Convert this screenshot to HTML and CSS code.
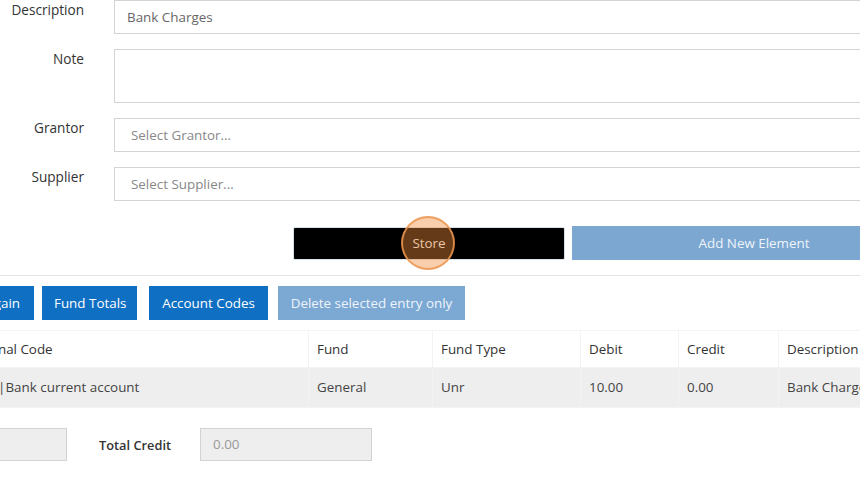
FILE: index.html
```html
<!DOCTYPE html>
<html>
<head>
	<meta charset="utf-8">
	<title>Journal Entry</title>
	<link rel="stylesheet" href="styles.css">
</head>
<body>
<main class="page">
	<div class="form-row">
		<label class="form-label">Description</label>
		<input class="form-input" type="text" value="Bank Charges">
	</div>
	<div class="form-row">
		<label class="form-label">Note</label>
		<textarea class="form-input form-note"></textarea>
	</div>
	<div class="form-row">
		<label class="form-label">Grantor</label>
		<div class="form-input form-select">Select Grantor...</div>
	</div>
	<div class="form-row">
		<label class="form-label">Supplier</label>
		<div class="form-input form-select">Select Supplier...</div>
	</div>

	<div class="actions">
		<button class="btn btn-store">Store<span class="click-mark"></span></button>
		<button class="btn btn-add">Add New Element</button>
	</div>

	<hr class="divider">

	<div class="toolbar">
		<button class="btn btn-blue btn-again">Start Again</button>
		<button class="btn btn-blue btn-totals">Fund Totals</button>
		<button class="btn btn-blue btn-codes">Account Codes</button>
		<button class="btn btn-disabled">Delete selected entry only</button>
	</div>

	<table class="entries">
		<colgroup>
			<col class="c-code">
			<col class="c-fund">
			<col class="c-type">
			<col class="c-debit">
			<col class="c-credit">
			<col class="c-desc">
		</colgroup>
		<thead>
			<tr>
				<th>Nominal Code</th>
				<th>Fund</th>
				<th>Fund Type</th>
				<th>Debit</th>
				<th>Credit</th>
				<th>Description</th>
			</tr>
		</thead>
		<tbody>
			<tr>
				<td>1200 |Bank current account</td>
				<td>General</td>
				<td>Unr</td>
				<td>10.00</td>
				<td>0.00</td>
				<td>Bank Charges</td>
			</tr>
		</tbody>
	</table>

	<div class="totals">
		<span class="total-label total-debit">Total Debit</span>
		<div class="total-input">10.00</div>
		<span class="total-label total-credit">Total Credit</span>
		<div class="total-input">0.00</div>
	</div>
</main>
</body>
</html>
```

FILE: styles.css
```css
html, body { margin: 0; padding: 0; overflow: hidden; background: #fff; }
body { font-family: "Open Sans", "Liberation Sans", sans-serif; font-size: 13.4px; color: #333; }
.page { width: 1100px; }

.form-row { display: flex; align-items: flex-start; margin-bottom: 15px; }
.form-label { width: 84px; margin-right: 30px; text-align: right; line-height: 20px; font-size: 13.6px; }
.form-input { flex: 1; box-sizing: border-box; height: 34px; margin: 0; padding: 6px 12px; border: 1px solid #d4d4d4; font: inherit; color: #666; background: #fff; line-height: 20px; }
.form-note { height: 54px; resize: none; }
.form-select { padding-left: 16px; color: #888; }

.actions { display: flex; align-items: center; margin: 25px 0 0 293px; }
.btn { box-sizing: border-box; height: 34px; padding: 0 12px; border: 0; font: inherit; color: #fff; line-height: 34px; text-align: center; white-space: nowrap; cursor: pointer; }
.btn-store { position: relative; width: 272px; height: 33px; line-height: 31px; background: #000; border: 1px solid #d6e2ea; border-radius: 2px; color: #eee; margin-right: 7px; }
.btn-add { width: 364px; background: #7ba7d1; color: #eef4fa; }
.click-mark { position: absolute; left: 107px; top: -12px; width: 54px; height: 54px; border-radius: 50%; background: rgba(238, 138, 58, 0.42); border: 2px solid rgba(236, 150, 80, 0.85); box-sizing: border-box; }

.divider { margin: 15px 0 0; border: 0; border-top: 1px solid #e4e4e4; }

.toolbar { display: flex; margin: 10px 0 0 -66px; }
.btn-blue { background: #0e6fc3; }
.btn-again { width: 100px; margin-right: 8px; text-align: right; padding-right: 14px; }
.btn-totals { width: 95px; margin-right: 12px; }
.btn-codes { width: 119px; margin-right: 10px; }
.btn-disabled { width: 187px; background: #7ca8d4; color: #eef4fa; }

.entries { margin: 10px 0 0 -45px; border-collapse: collapse; table-layout: fixed; width: 1060px; }
.c-code { width: 353px; }
.c-fund { width: 124px; }
.c-type { width: 148px; }
.c-debit { width: 98px; }
.c-credit { width: 100px; }
.entries th, .entries td { text-align: left; padding: 8px; line-height: 20px; border: 1px solid #f3f3f3; white-space: nowrap; overflow: hidden; }
.entries th { font-weight: normal; color: #333; }
.entries td { background: #eeeeee; color: #444; padding: 9px 8px 10px; }

.totals { display: flex; align-items: center; margin: 20px 0 0 -204px; }
.total-label { width: 70px; white-space: nowrap; font-weight: 600; font-size: 12.8px; color: #333; }
.total-debit { margin-right: 29px; }
.total-credit { margin: 0 29px 0 32px; width: 72px; }
.total-input { box-sizing: border-box; width: 172px; height: 33px; padding: 0 12px; line-height: 31px; background: #eee; border: 1px solid #d2d2d2; color: #999; }
```
